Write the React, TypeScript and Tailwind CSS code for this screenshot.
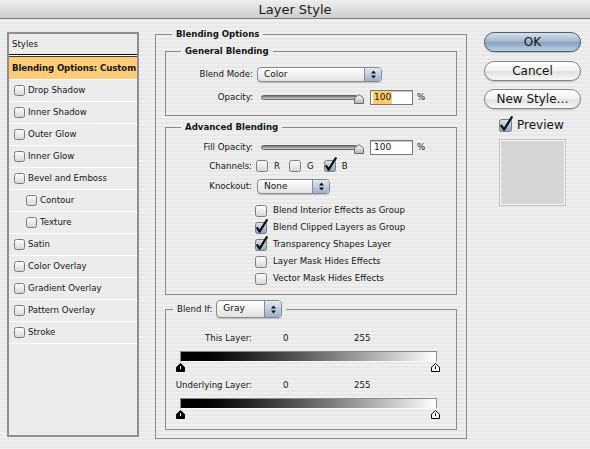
// Layer Style dialog — Aqua-era Photoshop blending options

const STYLE_ROWS = [
  { label: 'Drop Shadow', indent: false },
  { label: 'Inner Shadow', indent: false },
  { label: 'Outer Glow', indent: false },
  { label: 'Inner Glow', indent: false },
  { label: 'Bevel and Emboss', indent: false },
  { label: 'Contour', indent: true },
  { label: 'Texture', indent: true },
  { label: 'Satin', indent: false },
  { label: 'Color Overlay', indent: false },
  { label: 'Gradient Overlay', indent: false },
  { label: 'Pattern Overlay', indent: false },
  { label: 'Stroke', indent: false },
]

const OPTION_ROWS = [
  { label: 'Blend Interior Effects as Group', checked: false },
  { label: 'Blend Clipped Layers as Group', checked: true },
  { label: 'Transparency Shapes Layer', checked: true },
  { label: 'Layer Mask Hides Effects', checked: false },
  { label: 'Vector Mask Hides Effects', checked: false },
]

function Defs() {
  return (
    <svg width="0" height="0" className="block h-0 w-0 shrink-0">
      <defs>
        <linearGradient id="boxOff" x1="0" y1="0" x2="0" y2="1">
          <stop offset="0" stopColor="#ffffff" />
          <stop offset="1" stopColor="#d6d6d6" />
        </linearGradient>
        <linearGradient id="boxOn" x1="0" y1="0" x2="0" y2="1">
          <stop offset="0" stopColor="#dbe4ef" />
          <stop offset="1" stopColor="#8ea5c2" />
        </linearGradient>
        <linearGradient id="thumb" x1="0" y1="0" x2="0" y2="1">
          <stop offset="0" stopColor="#ffffff" />
          <stop offset="1" stopColor="#b4b4b4" />
        </linearGradient>
      </defs>
    </svg>
  )
}

function CheckBox({ checked = false, size = 11 }: { checked?: boolean; size?: number }) {
  return (
    <svg width={size + 1} height={size + 1} viewBox={`0 0 ${size + 1} ${size + 1}`} className="shrink-0 overflow-visible">
      <rect
        x="0.5"
        y="0.5"
        width={size}
        height={size}
        rx="2"
        fill={checked ? 'url(#boxOn)' : 'url(#boxOff)'}
        stroke="#7d7d7d"
      />
      {checked && (
        <path
          d={`M2.3 ${size * 0.55} L${size * 0.42} ${size - 1.3} L${size + 0.8} -1.8`}
          fill="none"
          stroke="#0d0d0d"
          strokeWidth="2.2"
          strokeLinecap="round"
          strokeLinejoin="round"
        />
      )}
    </svg>
  )
}

function Arrows() {
  return (
    <svg width="7" height="9" viewBox="0 0 7 9">
      <path d="M3.5 0.5 L6 3.5 H1 Z" fill="#111" />
      <path d="M1 5.5 H6 L3.5 8.5 Z" fill="#111" />
    </svg>
  )
}

function PopUp({ value, className }: { value: string; className: string }) {
  return (
    <div
      className={`flex overflow-hidden rounded-[4px] border border-[#8a8a8a] bg-gradient-to-b from-white to-[#e2e2e2] shadow-[0_1px_1px_rgba(0,0,0,0.18)] ${className}`}
    >
      <span className="flex flex-1 items-center pl-[6px] text-[9px]">{value}</span>
      <span className="flex w-[17px] items-center justify-center border-l border-[#8a8a8a] bg-gradient-to-b from-[#e3eaf2] to-[#9bb0cb]">
        <Arrows />
      </span>
    </div>
  )
}

function Slider() {
  return (
    <div className="ml-[8px] flex items-center">
      <div className="h-[5px] w-[97px] rounded-full border border-[#666] bg-gradient-to-b from-[#6e6e6e] to-[#d6d6d6]" />
      <svg width="10" height="10" viewBox="0 0 10 10" className="-ml-[4px] mt-[2px]">
        <path d="M0.5 9.5 V5.2 Q0.5 3.8 2 2.8 L5 0.6 L8 2.8 Q9.5 3.8 9.5 5.2 V9.5 Z" fill="url(#thumb)" stroke="#6a6a6a" />
      </svg>
    </div>
  )
}

function NumField({ value, selected = false }: { value: string; selected?: boolean }) {
  return (
    <div className="ml-[6px] flex h-[15px] w-[43px] items-center border border-[#7a7a7a] bg-white pl-[2px] text-[9px] shadow-[inset_0_1px_1px_rgba(0,0,0,0.25)]">
      <span className={selected ? 'bg-[#ffcb6b] px-[1px]' : 'px-[1px]'}>{value}</span>
    </div>
  )
}

function Marker({ dark = false }: { dark?: boolean }) {
  return (
    <svg width="9" height="9" viewBox="0 0 9 9">
      <path
        d="M0.5 8.5 V5 Q0.5 4 1.5 3.2 L4.5 0.6 L7.5 3.2 Q8.5 4 8.5 5 V8.5 Z"
        fill={dark ? '#000' : '#fff'}
        stroke="#000"
      />
      <path d="M4.5 3.2 V6.2" stroke={dark ? '#fff' : '#000'} />
    </svg>
  )
}

function AquaButton({ children, primary = false, className = '' }: { children: string; primary?: boolean; className?: string }) {
  return (
    <div
      className={`flex h-[20px] items-center justify-center rounded-full border text-[12px] leading-none shadow-[0_1px_1px_rgba(0,0,0,0.2)] ${
        primary
          ? 'border-[#4e5d70] bg-[linear-gradient(180deg,#d6e0ec_0%,#a6b8cf_45%,#8aa1bf_55%,#bcd0e6_100%)]'
          : 'border-[#858585] bg-[linear-gradient(180deg,#ffffff_0%,#f2f2f2_45%,#e1e1e1_55%,#f8f8f8_100%)]'
      } ${className}`}
    >
      {children}
    </div>
  )
}

function StylesList() {
  return (
    <div className="ml-[7px] mt-[13px] flex h-[405px] w-[132px] flex-col border-2 border-[#8f8f8f] bg-[#ececec]">
      <div className="flex h-[21px] items-center border-b border-[#111] pl-[3px]">Styles</div>
      <div className="h-[1px] bg-white" />
      <div className="flex h-[24px] items-center whitespace-nowrap border-t border-b border-t-[#3a3a3a] border-b-white bg-[#ffcc7a] pl-[3px] font-bold tracking-[-0.1px]">
        Blending Options: Custom
      </div>
      {STYLE_ROWS.map((row) => (
        <div
          key={row.label}
          className={`flex h-[22px] items-center border-b border-white ${row.indent ? 'pl-[17px]' : 'pl-[5px]'}`}
        >
          <CheckBox size={10} />
          <span className="ml-[3px]">{row.label}</span>
        </div>
      ))}
    </div>
  )
}

function BlendingOptions() {
  return (
    <fieldset className="ml-[16px] mt-[9px] w-[312px] border border-[#8c8c8c] pb-[8px]">
      <legend className="ml-[16px] px-[4px] font-bold leading-[12px]">Blending Options</legend>

      <fieldset className="mx-[9px] mt-[5px] border border-[#8c8c8c] pb-[10px]">
        <legend className="ml-[15px] px-[4px] font-bold leading-[12px]">General Blending</legend>
        <div className="mt-[10px] flex h-[15px] items-center">
          <span className="w-[87px] text-right">Blend Mode:</span>
          <PopUp value="Color" className="ml-[4px] h-[15px] w-[125px]" />
        </div>
        <div className="mt-[8px] flex h-[15px] items-center">
          <span className="w-[87px] text-right">Opacity:</span>
          <Slider />
          <NumField value="100" selected />
          <span className="ml-[4px]">%</span>
        </div>
      </fieldset>

      <fieldset className="mx-[9px] mt-[5px] border border-[#8c8c8c] pb-[7px]">
        <legend className="ml-[15px] px-[4px] font-bold leading-[12px]">Advanced Blending</legend>
        <div className="mt-[7px] flex h-[15px] items-center">
          <span className="w-[87px] text-right">Fill Opacity:</span>
          <Slider />
          <NumField value="100" />
          <span className="ml-[4px]">%</span>
        </div>
        <div className="mt-[5px] flex h-[12px] items-center">
          <span className="w-[86px] text-right">Channels:</span>
          <span className="ml-[4px] flex items-center">
            <CheckBox />
            <span className="ml-[6px]">R</span>
          </span>
          <span className="ml-[9px] flex items-center">
            <CheckBox />
            <span className="ml-[6px]">G</span>
          </span>
          <span className="ml-[10px] flex items-center">
            <CheckBox checked />
            <span className="ml-[6px]">B</span>
          </span>
        </div>
        <div className="mt-[7px] flex h-[15px] items-center">
          <span className="w-[86px] text-right">Knockout:</span>
          <PopUp value="None" className="ml-[5px] h-[15px] w-[73px]" />
        </div>
        <div className="ml-[89px] mt-[8px] flex flex-col">
          {OPTION_ROWS.map((row) => (
            <div key={row.label} className="flex h-[17px] items-center">
              <CheckBox checked={row.checked} />
              <span className="ml-[6px]">{row.label}</span>
            </div>
          ))}
        </div>
      </fieldset>

      <fieldset className="mx-[9px] mt-[5px] border border-[#8c8c8c] pb-[10px]">
        <legend className="ml-[7px] px-[4px]">
          <div className="flex h-[18px] items-center">
            <span>Blend If:</span>
            <PopUp value="Gray" className="ml-[4px] h-[18px] w-[66px]" />
          </div>
        </legend>
        <div className="mt-[14px] flex h-[12px] items-center">
          <span className="w-[86px] text-right">This Layer:</span>
          <span className="ml-[31px] w-[71px]">0</span>
          <span>255</span>
        </div>
        <div className="ml-[14px] mt-[7px] h-[11px] w-[257px] border border-[#8a8a8a] border-b-[#fafafa] bg-gradient-to-r from-black to-white" />
        <div className="ml-[10px] mt-[1px] flex w-[264px] justify-between">
          <Marker dark />
          <Marker />
        </div>
        <div className="mt-[7px] flex h-[12px] items-center">
          <span className="w-[86px] text-right">Underlying Layer:</span>
          <span className="ml-[31px] w-[71px]">0</span>
          <span>255</span>
        </div>
        <div className="ml-[14px] mt-[7px] h-[11px] w-[257px] border border-[#8a8a8a] border-b-[#fafafa] bg-gradient-to-r from-black to-white" />
        <div className="ml-[10px] mt-[1px] flex w-[264px] justify-between">
          <Marker dark />
          <Marker />
        </div>
      </fieldset>
    </fieldset>
  )
}

function Buttons() {
  return (
    <div className="ml-[17px] mt-[13px] flex w-[97px] flex-col">
      <AquaButton primary>OK</AquaButton>
      <AquaButton className="mt-[9px]">Cancel</AquaButton>
      <AquaButton className="mt-[8px]">New Style…</AquaButton>
      <div className="ml-[15px] mt-[9px] flex h-[14px] items-center text-[12px]">
        <CheckBox checked size={12} />
        <span className="ml-[5px]">Preview</span>
      </div>
      <div className="ml-[16px] mt-[8px] h-[65px] w-[65px] border border-[#f6f6f6] bg-[#d6d6d6] shadow-[0_0_0_1px_#c2c2c2]" />
    </div>
  )
}

export default function App() {
  return (
    <div className="flex h-[449px] w-[590px] flex-col overflow-hidden bg-[repeating-linear-gradient(180deg,#efefef_0px,#efefef_2px,#e8e8e8_2px,#e8e8e8_4px)] font-['DejaVu_Sans','Lucida_Grande',sans-serif] text-[8.6px] text-[#141414]">
      <Defs />
      <div className="flex h-[19px] shrink-0 items-center justify-center border-b border-[#7d7d7d] bg-gradient-to-b from-[#efefef] to-[#cdcdcd] text-[13px] leading-none text-[#1b1b1b]">
        Layer Style
      </div>
      <div className="flex items-start">
        <StylesList />
        <BlendingOptions />
        <Buttons />
      </div>
    </div>
  )
}
